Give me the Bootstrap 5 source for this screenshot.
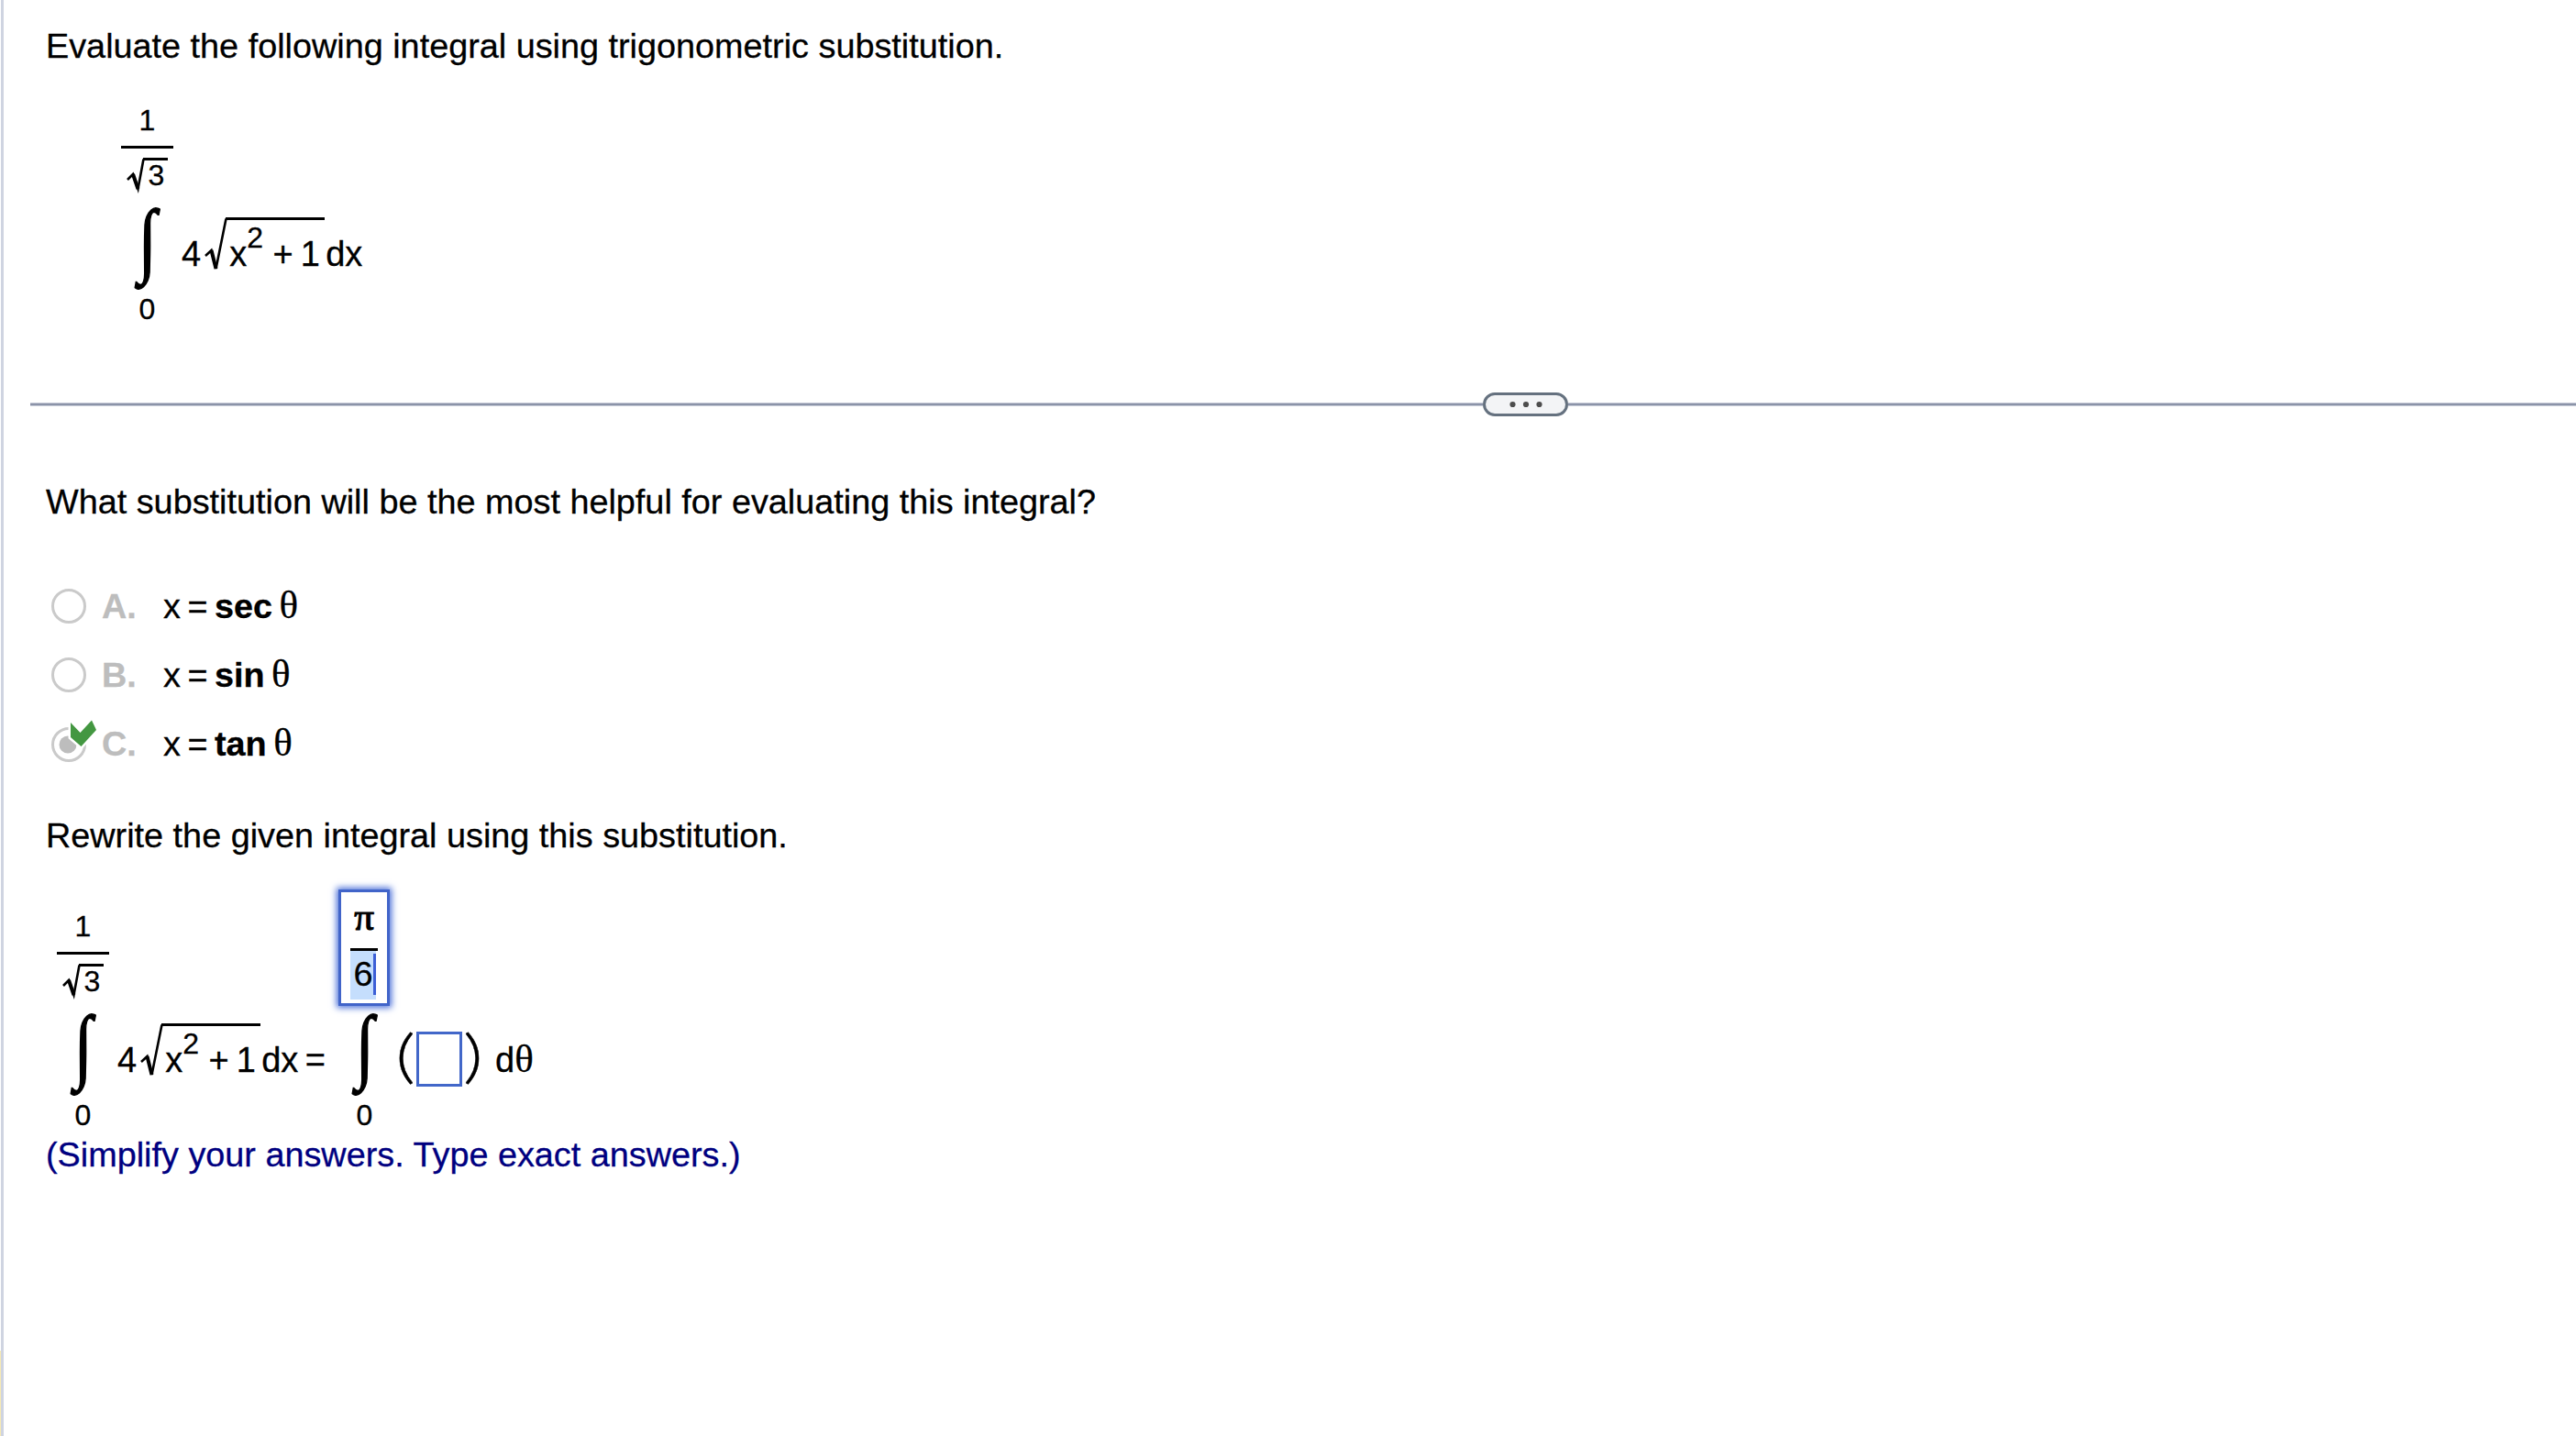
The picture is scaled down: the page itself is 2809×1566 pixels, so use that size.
<!DOCTYPE html>
<html lang="en">
<head>
<meta charset="utf-8">
<title>Trigonometric substitution</title>
<link href="https://cdn.jsdelivr.net/npm/bootstrap@5.3.0/dist/css/bootstrap.min.css" rel="stylesheet">
<style>
body{background:#fff;color:#000;font-family:"Liberation Sans",Arial,sans-serif;font-size:37.8px;line-height:44px;height:1566px;overflow:hidden;-webkit-text-stroke:.3px currentColor}
.edge{width:4px;border-left:1px solid #fff;background:#cfd4e1;background-clip:padding-box;flex:none}
.edge-note{left:0;top:1473px;width:1px;height:93px;background:#f6eab5}
.page-main{min-width:0}
.indent{padding-left:46px}
.line{height:44px;white-space:nowrap}
.f-one{margin:43px 0 0 128px;height:238px}
.f-two{margin:37px 0 0 58px;height:262px}
.op{width:57px}
.lim{font-size:32px;line-height:32px}
.num{height:44px}
.bar{height:3px;width:57px;background:#000}
.den{height:56px;padding:10px 6px 0 6px}
.rad-s{border-top:3px solid #000;width:27px;height:38px;padding-left:5.5px;margin-left:-2px}
.int{height:103px;width:57px}
.int span{display:block;font-family:"Liberation Serif",serif;font-size:90px;line-height:103px;transform:translateY(-9.5px) scaleX(.8);-webkit-text-stroke:1.6px #000}
.expr{height:60px;margin-bottom:56px}
.expr .tk{font-size:38px;line-height:44px;padding-top:18px;white-space:nowrap}
.rad{border-top:3px solid #000;width:108px;height:60px;margin-left:-2px}
.rad .tk{padding-top:15px}
.sup{font-size:32px;line-height:32px;padding-top:3px}
.rule-line{height:4px;background:#8b93a8;border:solid #c5cad6;border-width:1px 0}
.pill{width:93px;height:26px;border:3px solid #65717f;border-radius:13px;background:#f3f4f6}
.options{margin-top:54px;margin-bottom:40px}
.opt{height:75.3px;padding-left:6px}
.opt svg{margin-top:1px}
.opt .key{color:#bdbdbd;font-weight:700;width:67px;margin-left:17px}
.opt .eq{margin-left:7.5px}
.th{font-family:"Liberation Serif",serif;font-size:43px;line-height:0}
.answer{width:56px;height:127px;border:3.5px solid #4164c9;box-shadow:0 0 7px 2px #4a6fd8;padding:0 10px 0 10px}
.pi{font-family:"Liberation Serif",serif;font-size:43px;line-height:44px;height:61px;padding-top:5px;-webkit-text-stroke:1.2px #000}
.sel{background:#c5defd;height:53px;width:28px;padding-top:3px}
.caret{width:3px;height:45px;background:#3c5fd6;right:0;top:3px}
.blank{width:50px;height:60px;border:3px solid #4267c9}
.paren{font-family:Lato,sans-serif;font-weight:300;font-size:60px;line-height:60px;width:16px;transform:translateY(4px) scale(1.4,1.06)}
.paren-l{transform-origin:100% 50%}
.paren-r{transform-origin:0 50%}
.note{color:#000080}
</style>
</head>
<body class="d-flex position-relative">
<div class="edge"></div>
<div class="edge-note position-absolute"></div>
<main class="page-main flex-grow-1 d-flex flex-column">
  <div class="indent line" style="margin-top:28px">Evaluate the following integral using trigonometric substitution.</div>

  <div class="f-one d-flex align-items-end">
    <div class="op">
      <div class="lim num text-center">1</div>
      <div class="bar"></div>
      <div class="den d-flex">
        <svg width="20" height="40" viewBox="0 0 20 40" class="flex-shrink-0"><path d="M1 24L7 18L12.5 34L18.5 1.5" fill="none" stroke="#000" stroke-width="2.6"/><path d="M7 18L12.5 34" stroke="#000" stroke-width="4"/></svg>
        <div class="rad-s lim flex-shrink-0">3</div>
      </div>
      <div class="int text-center"><span>∫</span></div>
      <div class="lim text-center">0</div>
    </div>
    <div class="expr d-flex">
      <div class="tk" style="margin-left:9px">4</div>
      <svg width="25" height="60" viewBox="0 0 25 60" class="flex-shrink-0" style="margin-left:4px"><path d="M1 42L7.5 36L12.5 56L23.5 1.5" fill="none" stroke="#000" stroke-width="2.6"/><path d="M7.5 36L12.5 56" stroke="#000" stroke-width="4"/></svg>
      <div class="rad d-flex">
        <div class="tk" style="margin-left:4px">x</div><div class="sup">2</div><div class="tk" style="margin-left:10.5px">+</div><div class="tk" style="margin-left:8px">1</div>
      </div>
      <div class="tk" style="margin-left:1px">dx</div>
    </div>
  </div>

  <div class="d-flex align-items-center" style="margin:75px 0 0 29px">
    <div class="rule-line" style="width:1584px"></div>
    <div class="pill d-flex align-items-center justify-content-center"><svg width="36" height="8" viewBox="0 0 36 8" fill="#4d4d4d"><circle cx="3.5" cy="4" r="3.1"/><circle cx="18" cy="4" r="3.1"/><circle cx="32.5" cy="4" r="3.1"/></svg></div>
    <div class="rule-line flex-grow-1"></div>
  </div>

  <div class="indent line" style="margin-top:71px">What substitution will be the most helpful for evaluating this integral?</div>

  <div class="indent options">
    <div class="opt d-flex align-items-center">
      <svg width="38" height="38" viewBox="0 0 38 38"><circle cx="19" cy="19" r="17.5" fill="#fff" stroke="#cacaca" stroke-width="3"/></svg>
      <div class="key">A.</div><div class="d-flex align-items-baseline"><span>x</span><span class="eq">=</span><b class="eq">sec</b><span class="th eq">θ</span></div>
    </div>
    <div class="opt d-flex align-items-center">
      <svg width="38" height="38" viewBox="0 0 38 38"><circle cx="19" cy="19" r="17.5" fill="#fff" stroke="#cacaca" stroke-width="3"/></svg>
      <div class="key">B.</div><div class="d-flex align-items-baseline"><span>x</span><span class="eq">=</span><b class="eq">sin</b><span class="th eq">θ</span></div>
    </div>
    <div class="opt d-flex align-items-center">
      <svg width="38" height="38" viewBox="0 0 38 38" overflow="visible"><circle cx="19" cy="19" r="17.5" fill="#fff" stroke="#cacaca" stroke-width="3"/><circle cx="18" cy="19" r="9.5" fill="#bdbdbd"/><path d="M21 -5L31.5 6L44 -7.500L49 3L32.5 21L21 11Z" fill="#439741" stroke="#fff" stroke-width="5" paint-order="stroke"/></svg>
      <div class="key">C.</div><div class="d-flex align-items-baseline"><span>x</span><span class="eq">=</span><b class="eq">tan</b><span class="th eq">θ</span></div>
    </div>
  </div>

  <div class="indent line">Rewrite the given integral using this substitution.</div>

  <div class="f-two d-flex align-items-end">
    <div class="op">
      <div class="lim num text-center">1</div>
      <div class="bar"></div>
      <div class="den d-flex">
        <svg width="20" height="40" viewBox="0 0 20 40" class="flex-shrink-0"><path d="M1 24L7 18L12.5 34L18.5 1.5" fill="none" stroke="#000" stroke-width="2.6"/><path d="M7 18L12.5 34" stroke="#000" stroke-width="4"/></svg>
        <div class="rad-s lim flex-shrink-0">3</div>
      </div>
      <div class="int text-center"><span>∫</span></div>
      <div class="lim text-center">0</div>
    </div>
    <div class="expr d-flex">
      <div class="tk" style="margin-left:9px">4</div>
      <svg width="25" height="60" viewBox="0 0 25 60" class="flex-shrink-0" style="margin-left:4px"><path d="M1 42L7.5 36L12.5 56L23.5 1.5" fill="none" stroke="#000" stroke-width="2.6"/><path d="M7.5 36L12.5 56" stroke="#000" stroke-width="4"/></svg>
      <div class="rad d-flex">
        <div class="tk" style="margin-left:4px">x</div><div class="sup">2</div><div class="tk" style="margin-left:10.5px">+</div><div class="tk" style="margin-left:8px">1</div>
      </div>
      <div class="tk" style="margin-left:1px">dx</div>
      <div class="tk" style="margin-left:7.5px">=</div>
    </div>
    <div class="op" style="margin-left:14px">
      <div class="answer">
        <div class="pi text-center">π</div>
        <div class="bar w-100"></div>
        <div class="sel position-relative text-center">6<span class="caret position-absolute"></span></div>
      </div>
      <div class="int text-center"><span>∫</span></div>
      <div class="lim text-center">0</div>
    </div>
    <div class="expr d-flex" style="margin-left:11px">
      <div class="paren paren-l text-end">(</div>
      <div class="blank" style="margin:9px 1px 0"></div>
      <div class="paren paren-r">)</div>
      <div class="tk" style="margin-left:19px">d<span class="th">θ</span></div>
    </div>
  </div>

  <div class="indent line note" style="margin-top:5px">(Simplify your answers. Type exact answers.)</div>
</main>
<script src="https://cdn.jsdelivr.net/npm/bootstrap@5.3.0/dist/js/bootstrap.bundle.min.js"></script>
</body>
</html>
